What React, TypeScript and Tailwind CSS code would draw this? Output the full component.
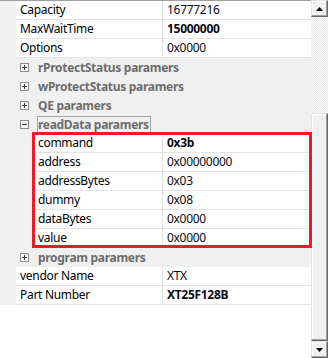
import React from "react";

const LINE = "border-[#e3e3e3]";

function Row({ label, value, bold, nested }: { label: string; value: string; bold?: boolean; nested?: boolean }) {
  return (
    <div className="flex h-[19px] shrink-0">
      <div className={(nested ? "w-[34px]" : "w-[16px]") + " shrink-0 bg-[#f0f0f0]"} />
      <div className={"flex flex-1 bg-white border-b " + LINE}>
        <div className={(nested ? "w-[129px]" : "w-[147px]") + " shrink-0 border-r " + LINE + " pl-[4px] leading-[18px] text-black whitespace-nowrap overflow-hidden"}>
          {label}
        </div>
        <div className={"flex-1 pl-[4px] leading-[18px] text-[#0a0a14] whitespace-nowrap " + (bold ? "font-bold" : "")}>{value}</div>
      </div>
    </div>
  );
}

function Box({ minus }: { minus?: boolean }) {
  return (
    <svg width="9" height="9" viewBox="0 0 9 9" className="shrink-0">
      <rect x="0.5" y="0.5" width="8" height="8" fill="#f7f7f7" stroke="#8c8c8c" />
      <line x1="2" y1="4.5" x2="7" y2="4.5" stroke="#3c3c3c" />
      {!minus && <line x1="4.5" y1="2" x2="4.5" y2="7" stroke="#3c3c3c" />}
    </svg>
  );
}

function Group({ label, open, focused }: { label: string; open?: boolean; focused?: boolean }) {
  return (
    <div className="flex h-[19px] shrink-0 items-center bg-[#f0f0f0] pl-[20px]">
      <Box minus={open} />
      {focused ? (
        <div className="ml-[8px] h-[18px] border border-[#a6a6a6] pr-[1px] leading-[16px] font-bold text-[#6d6d6d] whitespace-nowrap">
          {label}
        </div>
      ) : (
        <div className="ml-[9px] leading-[18px] font-bold text-[#6d6d6d] whitespace-nowrap">{label}</div>
      )}
    </div>
  );
}

function ScrollButton({ up }: { up?: boolean }) {
  return (
    <div className="h-[17px] w-[17px] shrink-0 flex items-center justify-center bg-[#f0f0f0] border border-t-[#e3e3e3] border-l-[#e3e3e3] border-r-[#696969] border-b-[#696969] shadow-[inset_-1px_-1px_#a0a0a0,inset_1px_1px_#fff]">
      <svg width="7" height="4" viewBox="0 0 7 4">
        {up ? <polygon points="3.5,0 7,4 0,4" fill="#000" /> : <polygon points="0,0 7,0 3.5,4" fill="#000" />}
      </svg>
    </div>
  );
}

export default function App() {
  return (
    <div className="relative flex h-[358px] w-[328px] overflow-hidden bg-white font-['Noto_Sans',sans-serif] text-[12px] tracking-[-0.3px]">
      <div className="flex flex-1 flex-col border-t border-[#a0a0a0]">
        <Row label="Capacity" value="16777216" />
        <Row label="MaxWaitTime" value="15000000" bold />
        <Row label="Options" value="0x0000" />
        <Group label="rProtectStatus paramers" />
        <Group label="wProtectStatus paramers" />
        <Group label="QE paramers" />
        <Group label="readData paramers" open focused />
        <Row nested label="command" value="0x3b" bold />
        <Row nested label="address" value="0x00000000" />
        <Row nested label="addressBytes" value="0x03" />
        <Row nested label="dummy" value="0x08" />
        <Row nested label="dataBytes" value="0x0000" />
        <Row nested label="value" value="0x0000" />
        <Group label="program paramers" />
        <Row label="vendor Name" value="XTX" />
        <Row label="Part Number" value="XT25F128B" bold />
      </div>
      <div className="flex w-[17px] shrink-0 flex-col">
        <ScrollButton up />
        <div className="h-[96px] shrink-0 bg-[repeating-conic-gradient(#ffffff_0_25%,#e6e6e6_0_50%)] bg-[length:2px_2px]" />
        <div className="h-[228px] shrink-0 bg-[#f0f0f0] border border-t-[#e3e3e3] border-l-[#e3e3e3] border-r-[#696969] border-b-[#696969] shadow-[inset_-1px_-1px_#a0a0a0,inset_1px_1px_#fff]" />
        <ScrollButton />
      </div>
      <div className="pointer-events-none absolute left-[32px] top-[132px] h-[116px] w-[280px] border-[3px] border-[#ec1c24]" />
    </div>
  );
}
